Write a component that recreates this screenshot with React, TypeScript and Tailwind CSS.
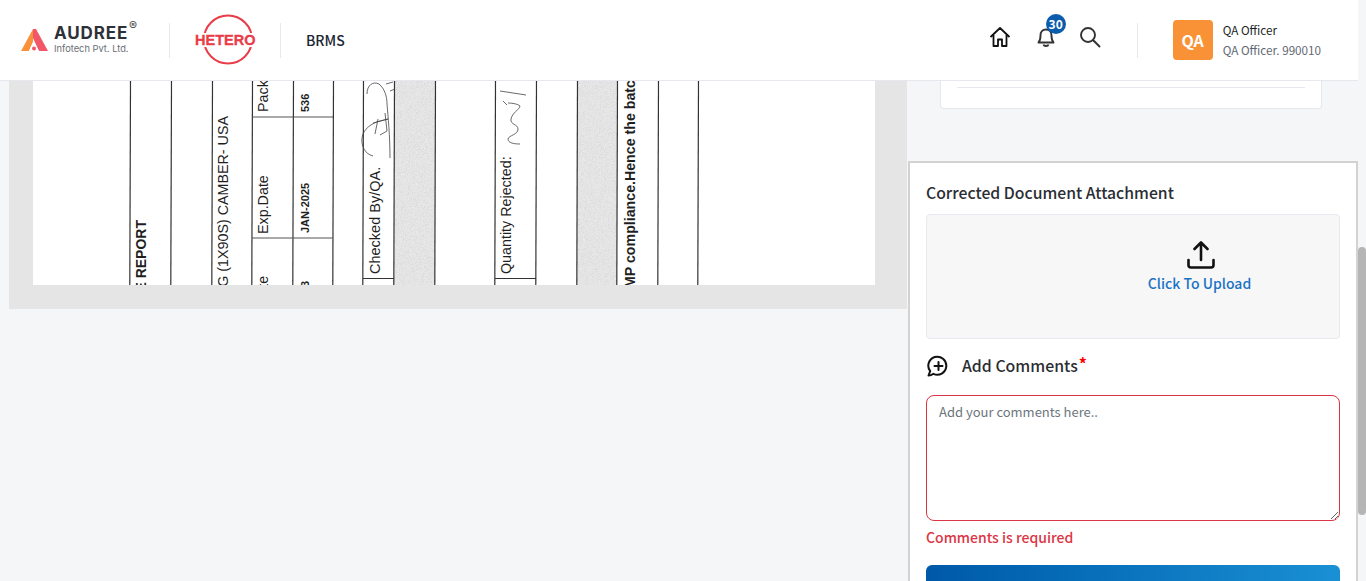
const uiFont = { fontFamily: '"Noto Sans CJK JP", "Noto Sans", sans-serif' }

function AudreeLogo() {
  return (
    <div className="flex items-center gap-[6px] w-[148px] ml-[20px]">
      <svg width="28" height="24" viewBox="0 0 28 24" className="shrink-0">
        <path d="M13 1 L1 23 H9 L13 14 Z" fill="#f9913a" />
        <path d="M13 1 L16 1 L28 23 H19 L13 10 Z" fill="#f25767" />
        <path d="M9 23 L13 14 L19 23 Z" fill="#fff" />
        <circle cx="14" cy="20.5" r="2" fill="#f25767" />
      </svg>
      <div className="relative leading-none text-[#2e3138] mt-[-2px]" style={{ fontFamily: 'Inter, sans-serif' }}>
        <div className="text-[17px] font-bold tracking-[0.9px] leading-[17px]">AUDREE</div>
        <div className="text-[9.3px] leading-[11px] text-[#6b6e75] mt-[1px]">Infotech Pvt. Ltd.</div>
        <span className="absolute left-[75px] top-[-5px] text-[12px] text-[#444]">®</span>
      </div>
    </div>
  )
}

function HeteroLogo() {
  return (
    <svg width="64" height="52" viewBox="0 0 64 52" className="shrink-0">
      <circle cx="34" cy="25.5" r="24" fill="none" stroke="#e93b48" strokeWidth="2" />
      <rect x="1" y="19" width="60" height="14" fill="#fff" />
      <text x="1" y="31" fontFamily="Liberation Sans" fontWeight="700" fontSize="14.5" fill="#e93b48" stroke="#e93b48" strokeWidth="0.3">HETERO</text>
    </svg>
  )
}

function ScanPage() {
  const cols = [130, 171, 212, 252, 293, 333, 363, 394, 435, 495, 536, 577, 617, 658, 698]
  const ox = 33
  const oy = 80
  const up = (x: number, y: number) => `translate(${x - ox} ${y - oy}) rotate(-90)`
  return (
    <svg width="842" height="205" viewBox="0 0 842 205" className="block" fontFamily="Liberation Sans" fill="#1f1f1f">
      <defs>
        <filter id="speckle" x="0" y="0" width="100%" height="100%">
          <feTurbulence type="fractalNoise" baseFrequency="1.4" numOctaves="2" seed="4" />
          <feColorMatrix values="0 0 0 0 0.6  0 0 0 0 0.6  0 0 0 0 0.6  0.9 0.9 0 0 -0.75" />
        </filter>
      </defs>
      <rect x={394 - ox} y="0" width="41" height="205" fill="#e8e8e8" />
      <rect x={577 - ox} y="0" width="40" height="205" fill="#e8e8e8" />
      <rect x={394 - ox} y="0" width="41" height="205" filter="url(#speckle)" />
      <rect x={577 - ox} y="0" width="40" height="205" filter="url(#speckle)" />
      {cols.map((x) => (
        <line key={x} x1={x - ox + 0.5} y1="0" x2={x - ox - 0.2} y2="205" stroke="#333" strokeWidth="1.2" />
      ))}
      <line x1={252 - ox} y1="36" x2={333 - ox} y2="36" stroke="#555" strokeWidth="1.2" />
      <line x1={252 - ox} y1="157" x2={333 - ox} y2="157" stroke="#555" strokeWidth="1.2" />
      <line x1={363 - ox} y1="197.5" x2={394 - ox} y2="197.5" stroke="#333" />
      <line x1={495 - ox} y1="197.5" x2={536 - ox} y2="197.5" stroke="#333" />

      <text transform={up(146, 219)} textAnchor="end" fontSize="14" fontWeight="700">E REPORT</text>
      <text transform={up(228, 115)} textAnchor="end" fontSize="14.3">G (1X90S) CAMBER- USA</text>
      <text transform={up(268, 111)} fontSize="14.3">Pack</text>
      <text transform={up(268, 233)} fontSize="14.3">Exp.Date</text>
      <text transform={up(268, 275)} textAnchor="end" fontSize="14">te</text>
      <text transform={up(309, 111)} fontSize="11" fontWeight="700">536</text>
      <text transform={up(309, 232)} fontSize="11" fontWeight="700">JAN-2025</text>
      <text transform={up(309, 286)} fontSize="11" fontWeight="700">3</text>
      <text transform={up(380, 273)} fontSize="14.5">Checked By/QA.</text>
      <text transform={up(511, 273)} fontSize="14.3">Quantity Rejected:</text>
      <text transform={up(635, 287)} fontSize="14.2" fontWeight="700">MP compliance.Hence the batch</text>

      {/* signatures */}
      <g fill="none" stroke="#444" strokeWidth="0.8" transform={`translate(${-ox} ${-oy})`}>
        <path d="M373 155 C365 153 361 145 362 137 C363 128 372 122 380 120 L388 118" />
        <path d="M367 93 C367 84 373 80 379 83 C385 88 387 96 387 103 C388 115 390 135 390 157" />
        <path d="M375 133 L378 118 M373 122 L388 118 M380 134 L387 130 M385 112 L387 130" />
        <path d="M386 83 L393 81 M390 90 L395 88" />
        <path d="M520 143 C514 143 508 142 508 138 C509 134 518 134 518 128 C518 123 510 124 511 118 C512 112 520 108 520 105 C518 103 512 102 508 102" />
        <path d="M500 90 L526 94 M503 100 L507 104" />
      </g>
    </svg>
  )
}

export default function App() {
  return (
    <div className="flex h-[581px] overflow-hidden bg-[#f5f6f8] text-[#212529]" style={uiFont}>
      <div className="w-[1358px] shrink-0">
        <header className="h-[81px] bg-white border-b border-[#e6e8ee] flex items-center">
          <AudreeLogo />
          <div className="w-px h-[35px] bg-[#e8e8e8] ml-[1px]" />
          <div className="ml-[24px]">
            <HeteroLogo />
          </div>
          <div className="w-px h-[35px] bg-[#e8e8e8] ml-[22px]" />
          <span className="ml-[25px] text-[14px] font-medium text-[#1c2635]">BRMS</span>

          <div className="ml-[644px] flex items-center">
            <svg width="22" height="22" viewBox="0 0 22 22" fill="none" stroke="#111" strokeWidth="1.8" strokeLinejoin="round" className="mt-[-7px]">
              <path d="M1.5 11 L11 2 L20.5 11 M4.5 9 V20 H9 V13.5 H13 V20 H17.5 V9" />
            </svg>
            <div className="relative ml-[24px] mt-[-7px]">
              <svg width="22" height="22" viewBox="0 0 22 22" fill="none" stroke="#333" strokeWidth="1.9" strokeLinejoin="round" className="block">
                <path d="M3.5 16.5 C5.5 14.5 5.5 13 5.5 9.5 C5.5 6 7.5 3.5 11 3.5 C14.5 3.5 16.5 6 16.5 9.5 C16.5 13 16.5 14.5 18.5 16.5 Z" />
                <path d="M8.5 18.5 C9 20.5 13 20.5 13.5 18.5" />
              </svg>
              <span className="absolute left-[11px] top-[-12px] w-[20px] h-[20px] rounded-full bg-[#0b5cad] text-white text-[12px] font-bold flex items-center justify-center">30</span>
            </div>
            <svg width="22" height="22" viewBox="0 0 22 22" fill="none" stroke="#333" strokeWidth="1.9" className="ml-[22px] mt-[-6px]">
              <circle cx="9" cy="9" r="7" />
              <path d="M14.5 14.5 L20.5 20.5" strokeLinecap="round" />
            </svg>
            <div className="w-px h-[35px] bg-[#e8e8e8] ml-[36px]" />
            <div className="ml-[35px] w-[40px] h-[40px] rounded-[4px] bg-[#f99236] text-white text-[16px] font-bold flex items-center justify-center">QA</div>
            <div className="ml-[10px] text-[11.7px] leading-[20px]">
              <div className="text-[#1b1f26]">QA Officer</div>
              <div className="text-[#5f6873]">QA Officer. 990010</div>
            </div>
          </div>
        </header>

        <main className="flex">
          <div className="pl-[9px] w-[908px] shrink-0">
            <div className="w-[898px] h-[228px] bg-[#e5e5e5] pl-[24px]">
              <div className="w-[842px] h-[204px] bg-white overflow-hidden">
                <ScanPage />
              </div>
            </div>
          </div>

          <div className="flex-1 min-w-0">
            <div className="ml-[32px] w-[382px] h-[28px] bg-white border border-t-0 border-[#e6e8ee] rounded-b-[4px] px-[16px] pt-[6px]">
              <div className="h-px bg-[#e6e8ee]" />
            </div>
            <section className="mt-[52px] h-[500px] bg-white border-2 border-b-0 border-[#d2d2d2] px-[16px] pt-[18px]">
              <h3 className="text-[15.75px] font-medium leading-[24px] text-[#2a2d33]">Corrected Document Attachment</h3>
              <div className="mt-[9px] h-[125px] bg-[#f7f7f8] border border-[#e6e9ef] rounded-[4px] pl-[221px] pt-[26px]">
                <div className="w-[103px] flex flex-col items-center">
                  <svg width="28" height="28" viewBox="0 0 28 28" fill="none" stroke="#111" strokeWidth="2.6" strokeLinecap="round" strokeLinejoin="round" className="ml-[3px]">
                    <path d="M14 19 V2 M7.5 8 L14 1.5 L20.5 8" />
                    <path d="M1.5 19 V24 C1.5 25.5 2.5 26.5 4 26.5 H24 C25.5 26.5 26.5 25.5 26.5 24 V19" />
                  </svg>
                  <span className="text-[14px] font-medium leading-[20px] mt-[4px] text-[#1b72c4] whitespace-nowrap">Click To Upload</span>
                </div>
              </div>
              <div className="mt-[15px] flex items-center h-[24px]">
                <svg width="22" height="22" viewBox="0 0 22 22" fill="none" stroke="#111" strokeWidth="2" strokeLinecap="round" className="ml-px">
                  <path d="M1.5 20.5 L3.2 16.2 A9 9 0 1 1 6.4 18.8 C4.8 20 3 20.5 1.5 20.5 Z" strokeLinejoin="round" />
                  <path d="M11.5 7 V15 M7.5 11 H15.5" />
                </svg>
                <span className="ml-[13px] text-[15.85px] font-medium text-[#2a2d33] leading-[24px]">
                  Add Comments<sup className="text-[#f00] text-[16px] font-bold top-[-2px] ml-px">*</sup>
                </span>
              </div>
              <textarea
                placeholder="Add your comments here.."
                className="mt-[17px] block w-full h-[126px] rounded-[8px] border border-[#dc3545] bg-white px-[12px] py-[6px] text-[13px] leading-[20px] placeholder:text-[#6c757d] outline-none"
              />
              <div className="mt-[5px] text-[14px] font-medium leading-[22px] text-[#dc3545]">Comments is required</div>
              <button type="button" className="mt-[17px] block w-full h-[40px] rounded-[6px] bg-gradient-to-r from-[#0059a8] to-[#1a90d4]" />
            </section>
          </div>
        </main>
      </div>

      <div className="w-[8px] shrink-0 pt-[247px]">
        <div className="h-[268px] rounded-[4px] bg-[#b5b5b5]" />
      </div>
    </div>
  )
}
